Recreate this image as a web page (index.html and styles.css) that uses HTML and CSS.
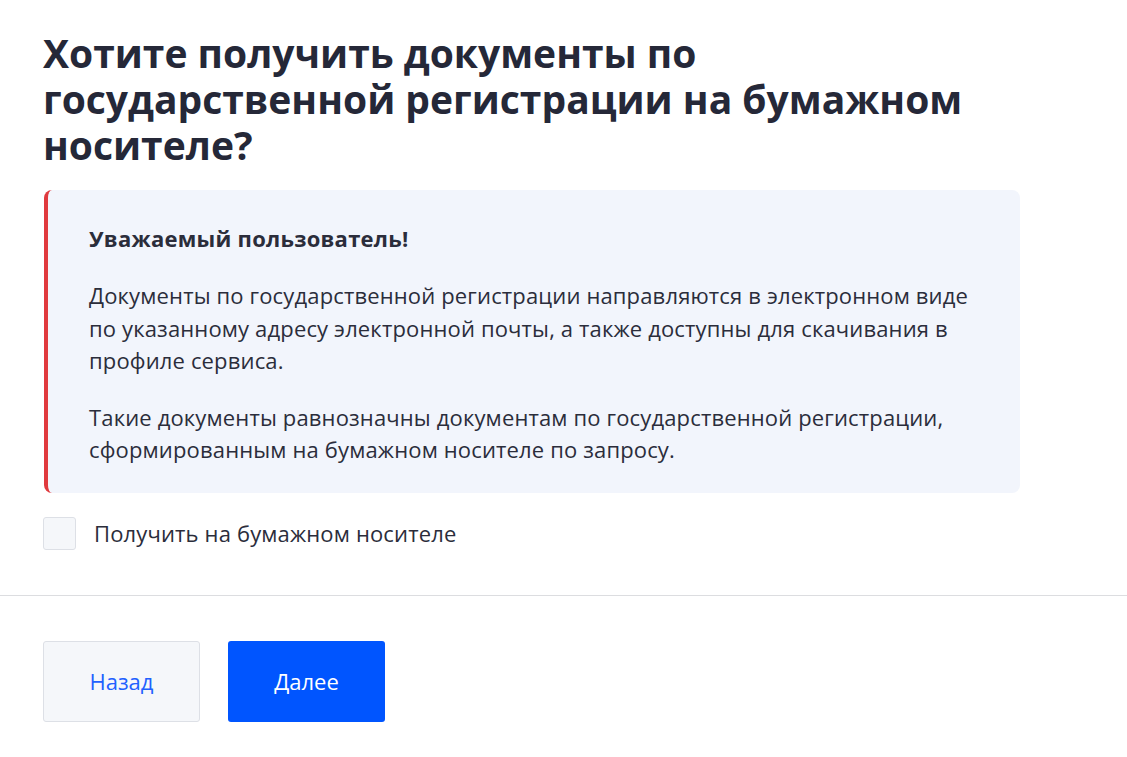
FILE: index.html
```html
<!DOCTYPE html>
<html lang="ru">
<head>
    <meta charset="UTF-8">
    <title>Документы на бумажном носителе</title>
    <link rel="stylesheet" href="styles.css">
</head>
<body>
    <div class="content">
        <h1 class="title">Хотите получить документы по государственной регистрации на бумажном носителе?</h1>
        <div class="notice">
            <div class="notice-head">Уважаемый пользователь!</div>
            <p>Документы по государственной регистрации направляются в электронном виде по указанному адресу электронной почты, а также доступны для скачивания в профиле сервиса.</p>
            <p>Такие документы равнозначны документам по государственной регистрации, сформированным на бумажном носителе по запросу.</p>
        </div>
        <label class="check-row">
            <span class="checkbox"></span>
            <span class="check-label">Получить на бумажном носителе</span>
        </label>
    </div>
    <div class="footer">
        <button class="btn btn-back">Назад</button>
        <button class="btn btn-next">Далее</button>
    </div>
</body>
</html>
```

FILE: styles.css
```css
body {
    font-family: "Open Sans", Arial, sans-serif;
    color: #2b2d3b;
    background-color: #fff;
    margin: 0;
}
.content {
    padding: 30px 43px 45px 43px;
    border-bottom: 1px solid #dcdde0;
}
.title {
    font-size: 39px;
    font-weight: 700;
    line-height: 46px;
    color: #252838;
    margin: 0 0 22px 0;
    max-width: 950px;
}
.notice {
    width: 976px;
    box-sizing: border-box;
    background-color: #f2f5fc;
    border-left: 4px solid #e03a3e;
    border-radius: 8px;
    padding: 33px 36px 27px 41px;
    margin-left: 1px;
}
.notice-head {
    font-size: 22px;
    font-weight: 700;
    line-height: 30px;
    letter-spacing: 0.25px;
    margin-bottom: 26px;
}
.notice p {
    font-size: 22px;
    line-height: 32.5px;
    letter-spacing: 0.15px;
    margin: 0 0 24px 0;
}
.notice p:last-child {
    margin-bottom: 0;
}
.check-row {
    display: flex;
    align-items: center;
    margin-top: 24px;
}
.checkbox {
    width: 33px;
    height: 33px;
    box-sizing: border-box;
    border: 1px solid #dde0e6;
    border-radius: 3px;
    background-color: #f5f7fa;
    margin-right: 18px;
}
.check-label {
    font-size: 22px;
    line-height: 30px;
    letter-spacing: 0.15px;
}
.footer {
    display: flex;
    gap: 28px;
    padding: 45px 43px;
}
.btn {
    width: 157px;
    height: 81px;
    font-family: "Open Sans", Arial, sans-serif;
    font-size: 22px;
    border-radius: 3px;
    cursor: pointer;
}
.btn-back {
    background-color: #f5f7fa;
    border: 1px solid #dde0e6;
    color: #2160ff;
}
.btn-next {
    background-color: #0055ff;
    border: none;
    color: #fff;
}
```
